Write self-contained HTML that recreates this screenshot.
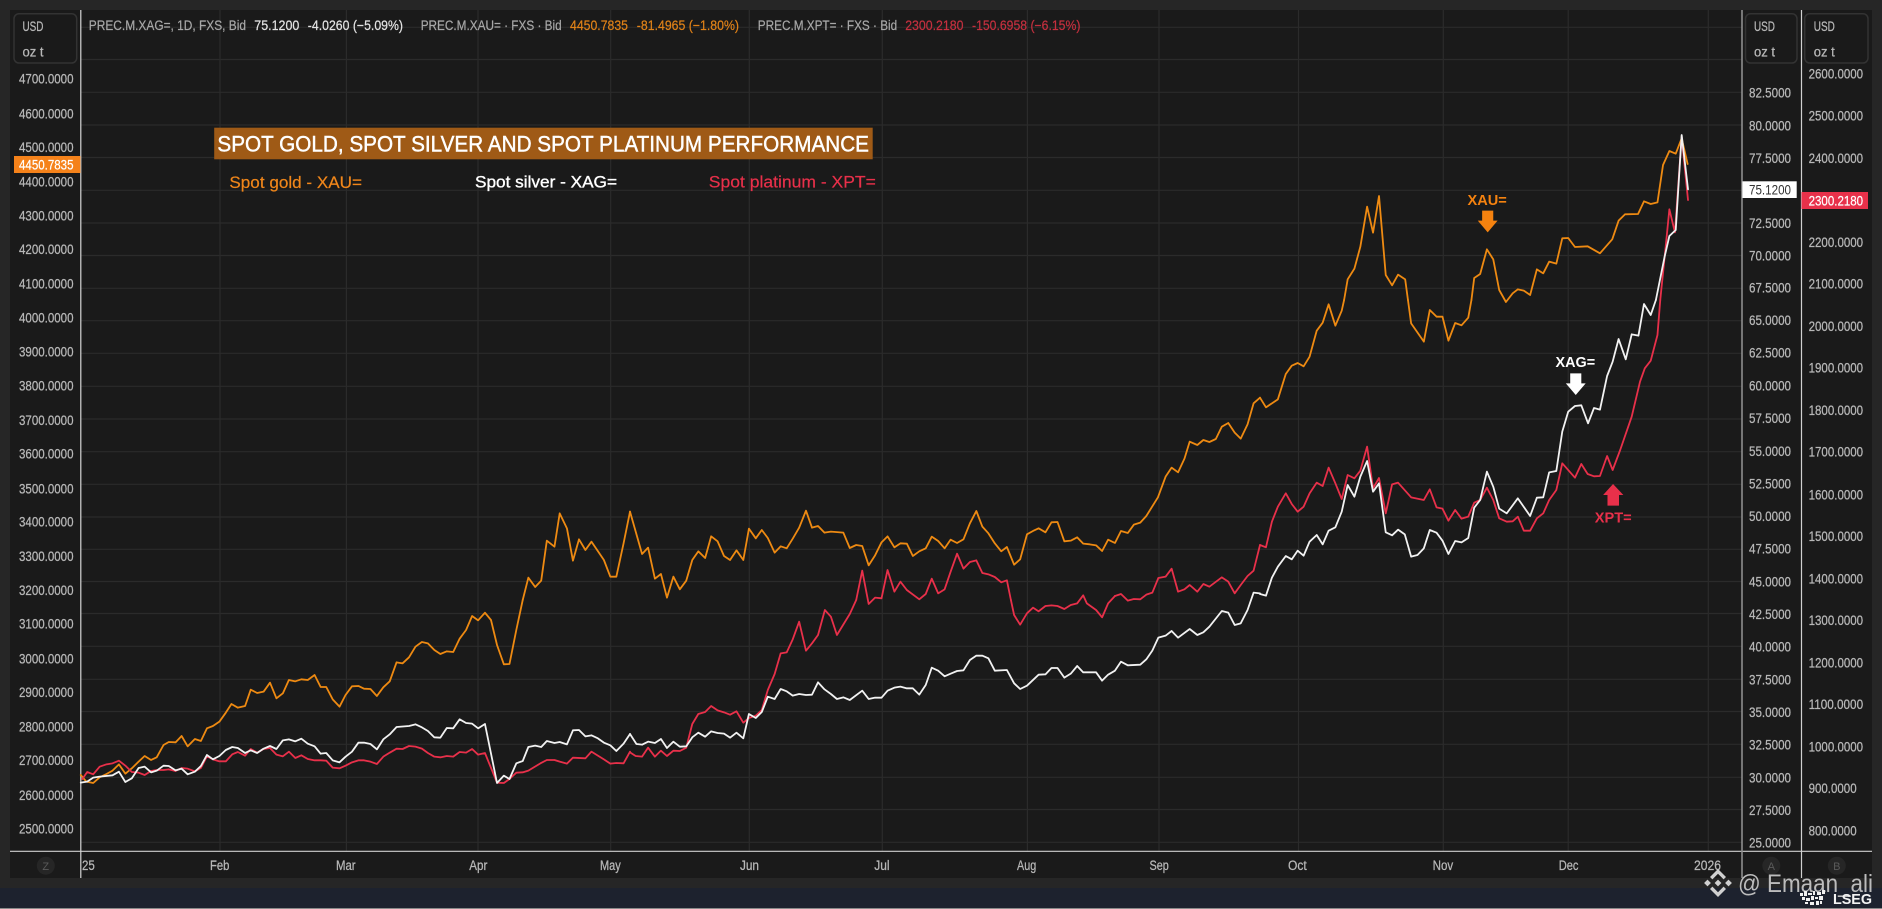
<!DOCTYPE html>
<html lang="en"><head><meta charset="utf-8"><title>Spot gold, silver and platinum</title>
<style>
html,body{margin:0;padding:0;background:#262626;width:1882px;height:909px;overflow:hidden}
svg{display:block;filter:blur(.3px)}
text{font-family:"Liberation Sans",sans-serif}
.ax text{font-size:13.5px;fill:#b8b8b8;stroke:#b8b8b8;stroke-width:.25}
.lg text{stroke-width:.2}
.l{fill:none;stroke-width:1.8;stroke-linejoin:round;stroke-linecap:round}
.l polyline{vector-effect:non-scaling-stroke}
.go{stroke:#ee8a12}.re{stroke:#e8304a}.wh{stroke:#f2f2f2}
</style></head><body>
<svg width="1882" height="909" viewBox="0 0 1882 909" xmlns="http://www.w3.org/2000/svg">
<rect width="1882" height="909" fill="#262626"/>
<rect x="0" y="888" width="1882" height="20" fill="#1d222e"/>
<rect x="0" y="908" width="1882" height="1" fill="#8a8a8a"/>
<rect x="10" y="10" width="1862" height="868" fill="#1a1a1a"/>

<!-- grid -->
<g stroke="#2b2b2b" stroke-width="1.2" fill="none">
<path d="M81 27.3H1742M81 59.5H1742M81 92.3H1742M81 125H1742M81 157.5H1742M81 190.3H1742M81 223H1742M81 255.5H1742M81 288.3H1742M81 320.7H1742M81 353.3H1742M81 386.3H1742M81 419H1742M81 451.7H1742M81 484.3H1742M81 517H1742M81 549.3H1742M81 581.5H1742M81 613.5H1742M81 646.3H1742M81 679.3H1742M81 711.5H1742M81 744.3H1742M81 777.3H1742M81 809.5H1742M81 842.3H1742"/>
<path d="M220 10V851M346.4 10V851M478 10V851M610.7 10V851M749.3 10V851M882.3 10V851M1027.4 10V851M1159 10V851M1298.5 10V851M1443.3 10V851M1568.2 10V851M1708.3 10V851"/>
</g>

<!-- axes -->
<path d="M10 851.3H1872" stroke="#cfcfcf" stroke-width="1.2"/>
<path d="M80.8 10V878" stroke="#d6d6d6" stroke-width="1.2"/>
<path d="M1742 10V878" stroke="#8e8e8e" stroke-width="1.6"/>
<path d="M1801.5 10V878" stroke="#d0d0d0" stroke-width="1.2"/>

<!-- unit boxes -->
<g fill="none" stroke="#333" stroke-width="1.5">
<rect x="14" y="13.7" width="62.7" height="49.3" rx="5"/>
<rect x="1745.5" y="13.7" width="51.5" height="49.3" rx="5"/>
<rect x="1804.7" y="13.7" width="63.3" height="49.3" rx="5"/>
</g>
<g class="ax">
<text x="22.5" y="31" textLength="21" lengthAdjust="spacingAndGlyphs">USD</text>
<text x="22.5" y="56.5" textLength="21" lengthAdjust="spacingAndGlyphs">oz t</text>
<text x="1754" y="31" textLength="21" lengthAdjust="spacingAndGlyphs">USD</text>
<text x="1754" y="56.5" textLength="21" lengthAdjust="spacingAndGlyphs">oz t</text>
<text x="1813.8" y="31" textLength="21" lengthAdjust="spacingAndGlyphs">USD</text>
<text x="1813.8" y="56.5" textLength="21" lengthAdjust="spacingAndGlyphs">oz t</text>
</g>

<!-- left axis -->
<g class="ax">
<text x="19" y="83.7" textLength="54.5" lengthAdjust="spacingAndGlyphs">4700.0000</text>
<text x="19" y="118.3" textLength="54.5" lengthAdjust="spacingAndGlyphs">4600.0000</text>
<text x="19" y="152" textLength="54.5" lengthAdjust="spacingAndGlyphs">4500.0000</text>
<text x="19" y="186.7" textLength="54.5" lengthAdjust="spacingAndGlyphs">4400.0000</text>
<text x="19" y="220.3" textLength="54.5" lengthAdjust="spacingAndGlyphs">4300.0000</text>
<text x="19" y="254" textLength="54.5" lengthAdjust="spacingAndGlyphs">4200.0000</text>
<text x="19" y="288.7" textLength="54.5" lengthAdjust="spacingAndGlyphs">4100.0000</text>
<text x="19" y="322.3" textLength="54.5" lengthAdjust="spacingAndGlyphs">4000.0000</text>
<text x="19" y="356.7" textLength="54.5" lengthAdjust="spacingAndGlyphs">3900.0000</text>
<text x="19" y="390.3" textLength="54.5" lengthAdjust="spacingAndGlyphs">3800.0000</text>
<text x="19" y="425" textLength="54.5" lengthAdjust="spacingAndGlyphs">3700.0000</text>
<text x="19" y="458.7" textLength="54.5" lengthAdjust="spacingAndGlyphs">3600.0000</text>
<text x="19" y="493.3" textLength="54.5" lengthAdjust="spacingAndGlyphs">3500.0000</text>
<text x="19" y="526.7" textLength="54.5" lengthAdjust="spacingAndGlyphs">3400.0000</text>
<text x="19" y="561" textLength="54.5" lengthAdjust="spacingAndGlyphs">3300.0000</text>
<text x="19" y="595" textLength="54.5" lengthAdjust="spacingAndGlyphs">3200.0000</text>
<text x="19" y="628.7" textLength="54.5" lengthAdjust="spacingAndGlyphs">3100.0000</text>
<text x="19" y="663.7" textLength="54.5" lengthAdjust="spacingAndGlyphs">3000.0000</text>
<text x="19" y="697" textLength="54.5" lengthAdjust="spacingAndGlyphs">2900.0000</text>
<text x="19" y="731.7" textLength="54.5" lengthAdjust="spacingAndGlyphs">2800.0000</text>
<text x="19" y="765" textLength="54.5" lengthAdjust="spacingAndGlyphs">2700.0000</text>
<text x="19" y="800" textLength="54.5" lengthAdjust="spacingAndGlyphs">2600.0000</text>
<text x="19" y="833.7" textLength="54.5" lengthAdjust="spacingAndGlyphs">2500.0000</text>
</g>
<rect x="14" y="156" width="66.4" height="17" fill="#f5821a"/>
<text x="19" y="169.7" font-size="13.5" fill="#fff" stroke="#fff" stroke-width=".2" textLength="54.5" lengthAdjust="spacingAndGlyphs">4450.7835</text>

<!-- axis A -->
<g class="ax">
<text x="1749" y="97.3" textLength="42" lengthAdjust="spacingAndGlyphs">82.5000</text>
<text x="1749" y="130.3" textLength="42" lengthAdjust="spacingAndGlyphs">80.0000</text>
<text x="1749" y="163" textLength="42" lengthAdjust="spacingAndGlyphs">77.5000</text>
<text x="1749" y="228" textLength="42" lengthAdjust="spacingAndGlyphs">72.5000</text>
<text x="1749" y="260.7" textLength="42" lengthAdjust="spacingAndGlyphs">70.0000</text>
<text x="1749" y="292.7" textLength="42" lengthAdjust="spacingAndGlyphs">67.5000</text>
<text x="1749" y="325" textLength="42" lengthAdjust="spacingAndGlyphs">65.0000</text>
<text x="1749" y="357.7" textLength="42" lengthAdjust="spacingAndGlyphs">62.5000</text>
<text x="1749" y="390.7" textLength="42" lengthAdjust="spacingAndGlyphs">60.0000</text>
<text x="1749" y="423" textLength="42" lengthAdjust="spacingAndGlyphs">57.5000</text>
<text x="1749" y="456" textLength="42" lengthAdjust="spacingAndGlyphs">55.0000</text>
<text x="1749" y="488.3" textLength="42" lengthAdjust="spacingAndGlyphs">52.5000</text>
<text x="1749" y="521" textLength="42" lengthAdjust="spacingAndGlyphs">50.0000</text>
<text x="1749" y="553.3" textLength="42" lengthAdjust="spacingAndGlyphs">47.5000</text>
<text x="1749" y="586.3" textLength="42" lengthAdjust="spacingAndGlyphs">45.0000</text>
<text x="1749" y="619" textLength="42" lengthAdjust="spacingAndGlyphs">42.5000</text>
<text x="1749" y="651.7" textLength="42" lengthAdjust="spacingAndGlyphs">40.0000</text>
<text x="1749" y="684.3" textLength="42" lengthAdjust="spacingAndGlyphs">37.5000</text>
<text x="1749" y="717" textLength="42" lengthAdjust="spacingAndGlyphs">35.0000</text>
<text x="1749" y="749.7" textLength="42" lengthAdjust="spacingAndGlyphs">32.5000</text>
<text x="1749" y="782.3" textLength="42" lengthAdjust="spacingAndGlyphs">30.0000</text>
<text x="1749" y="815" textLength="42" lengthAdjust="spacingAndGlyphs">27.5000</text>
<text x="1749" y="847.7" textLength="42" lengthAdjust="spacingAndGlyphs">25.0000</text>
</g>
<rect x="1742.4" y="181.3" width="54.3" height="16.7" fill="#fff"/>
<text x="1749" y="194.7" font-size="13.5" fill="#333" textLength="42" lengthAdjust="spacingAndGlyphs">75.1200</text>

<!-- axis B -->
<g class="ax">
<text x="1808.6" y="78.7" textLength="54.5" lengthAdjust="spacingAndGlyphs">2600.0000</text>
<text x="1808.6" y="120.3" textLength="54.5" lengthAdjust="spacingAndGlyphs">2500.0000</text>
<text x="1808.6" y="163" textLength="54.5" lengthAdjust="spacingAndGlyphs">2400.0000</text>
<text x="1808.6" y="247" textLength="54.5" lengthAdjust="spacingAndGlyphs">2200.0000</text>
<text x="1808.6" y="288.7" textLength="54.5" lengthAdjust="spacingAndGlyphs">2100.0000</text>
<text x="1808.6" y="331" textLength="54.5" lengthAdjust="spacingAndGlyphs">2000.0000</text>
<text x="1808.6" y="372.7" textLength="54.5" lengthAdjust="spacingAndGlyphs">1900.0000</text>
<text x="1808.6" y="415" textLength="54.5" lengthAdjust="spacingAndGlyphs">1800.0000</text>
<text x="1808.6" y="456.7" textLength="54.5" lengthAdjust="spacingAndGlyphs">1700.0000</text>
<text x="1808.6" y="499.3" textLength="54.5" lengthAdjust="spacingAndGlyphs">1600.0000</text>
<text x="1808.6" y="541" textLength="54.5" lengthAdjust="spacingAndGlyphs">1500.0000</text>
<text x="1808.6" y="583.7" textLength="54.5" lengthAdjust="spacingAndGlyphs">1400.0000</text>
<text x="1808.6" y="625" textLength="54.5" lengthAdjust="spacingAndGlyphs">1300.0000</text>
<text x="1808.6" y="667.7" textLength="54.5" lengthAdjust="spacingAndGlyphs">1200.0000</text>
<text x="1808.6" y="709" textLength="54.5" lengthAdjust="spacingAndGlyphs">1100.0000</text>
<text x="1808.6" y="751.7" textLength="54.5" lengthAdjust="spacingAndGlyphs">1000.0000</text>
<text x="1808.6" y="793" textLength="48" lengthAdjust="spacingAndGlyphs">900.0000</text>
<text x="1808.6" y="835.7" textLength="48" lengthAdjust="spacingAndGlyphs">800.0000</text>
</g>
<rect x="1801.5" y="192" width="66.5" height="17" fill="#e8314a"/>
<text x="1808.6" y="205.5" font-size="13.5" fill="#fff" stroke="#fff" stroke-width=".2" textLength="54.5" lengthAdjust="spacingAndGlyphs">2300.2180</text>

<!-- time axis -->
<g class="ax">
<text x="82" y="870" textLength="12.8" lengthAdjust="spacingAndGlyphs">25</text>
<text x="210" y="870" textLength="19.4" lengthAdjust="spacingAndGlyphs">Feb</text>
<text x="336" y="870" textLength="19.6" lengthAdjust="spacingAndGlyphs">Mar</text>
<text x="469.3" y="870" textLength="18.1" lengthAdjust="spacingAndGlyphs">Apr</text>
<text x="600" y="870" textLength="20.8" lengthAdjust="spacingAndGlyphs">May</text>
<text x="740" y="870" textLength="19" lengthAdjust="spacingAndGlyphs">Jun</text>
<text x="874.3" y="870" textLength="15.3" lengthAdjust="spacingAndGlyphs">Jul</text>
<text x="1017" y="870" textLength="19.2" lengthAdjust="spacingAndGlyphs">Aug</text>
<text x="1149.5" y="870" textLength="19.3" lengthAdjust="spacingAndGlyphs">Sep</text>
<text x="1288" y="870" textLength="18.8" lengthAdjust="spacingAndGlyphs">Oct</text>
<text x="1432.6" y="870" textLength="20.6" lengthAdjust="spacingAndGlyphs">Nov</text>
<text x="1558.7" y="870" textLength="19.8" lengthAdjust="spacingAndGlyphs">Dec</text>
<text x="1694" y="870" textLength="27" lengthAdjust="spacingAndGlyphs">2026</text>
</g>
<g fill="#262626"><circle cx="45.8" cy="865.7" r="9"/><circle cx="1771.3" cy="865.7" r="9"/><circle cx="1836.8" cy="865.7" r="9"/></g>
<g font-size="11" fill="#5a5a5a" text-anchor="middle"><text x="45.8" y="870">Z</text><text x="1771.3" y="870">A</text><text x="1836.8" y="870">B</text></g>

<!-- legend -->
<g font-size="13.5" class="lg">
<text x="88.8" y="30" fill="#a8a8a8" stroke="#a8a8a8" textLength="157.2" lengthAdjust="spacingAndGlyphs">PREC.M.XAG=, 1D, FXS, Bid</text>
<text x="254.3" y="30" fill="#e4e4e4" stroke="#e4e4e4" textLength="45" lengthAdjust="spacingAndGlyphs">75.1200</text>
<text x="307.8" y="30" fill="#e4e4e4" stroke="#e4e4e4" textLength="95.2" lengthAdjust="spacingAndGlyphs">-4.0260 (−5.09%)</text>
<text x="420.7" y="30" fill="#a8a8a8" stroke="#a8a8a8" textLength="141" lengthAdjust="spacingAndGlyphs">PREC.M.XAU= · FXS · Bid</text>
<text x="570" y="30" fill="#e08218" stroke="#e08218" textLength="58" lengthAdjust="spacingAndGlyphs">4450.7835</text>
<text x="636.8" y="30" fill="#e08218" stroke="#e08218" textLength="102.2" lengthAdjust="spacingAndGlyphs">-81.4965 (−1.80%)</text>
<text x="757.8" y="30" fill="#a8a8a8" stroke="#a8a8a8" textLength="139.4" lengthAdjust="spacingAndGlyphs">PREC.M.XPT= · FXS · Bid</text>
<text x="905.2" y="30" fill="#c4303f" stroke="#c4303f" textLength="58.3" lengthAdjust="spacingAndGlyphs">2300.2180</text>
<text x="972" y="30" fill="#c4303f" stroke="#c4303f" textLength="108.4" lengthAdjust="spacingAndGlyphs">-150.6958 (−6.15%)</text>
</g>

<!-- title -->
<rect x="214.2" y="127.7" width="658.5" height="31.6" fill="#9f5a16"/>
<text x="217.4" y="151.5" font-size="22" fill="#fff" stroke="#fff" stroke-width=".45" textLength="651.6" lengthAdjust="spacingAndGlyphs">SPOT GOLD, SPOT SILVER AND SPOT PLATINUM PERFORMANCE</text>
<text x="229.4" y="188" font-size="16.5" fill="#f0861a" stroke="#f0861a" stroke-width=".2" textLength="132.6" lengthAdjust="spacingAndGlyphs">Spot gold - XAU=</text>
<text x="475" y="187.5" font-size="16.5" fill="#fff" stroke="#fff" stroke-width=".35" textLength="142" lengthAdjust="spacingAndGlyphs">Spot silver - XAG=</text>
<text x="708.8" y="187.5" font-size="16.5" fill="#e8304a" stroke="#e8304a" stroke-width=".2" textLength="167.1" lengthAdjust="spacingAndGlyphs">Spot platinum - XPT=</text>

<!-- gold -->
<g class="l go">
<polyline transform="translate(0,600) scale(.40179,.33333)" points="201,525 215,545 232,549 248,532 265,522 280,512 296,493 312,521 328,505 345,485 360,468 376,480 390,472 407,435 420,426 437,427 452,408 467,439 485,417 500,423 515,385 530,378 546,365 562,338 576,312 592,323 610,318 624,269 640,279 656,275 672,248 688,295 704,280 719,240 735,244 750,238 766,240 783,225 798,261 812,261 828,298 845,320 860,285 876,259 892,258 906,266 922,267 938,288 954,262 970,244 987,187 1002,190 1018,172 1034,140 1050,126 1065,130 1081,150 1096,162 1112,154 1128,156 1144,116 1160,90 1175,48 1190,61 1207,38 1222,60 1237,135 1254,193 1268,192 1285,90 1301,0"/>
<polyline transform="translate(0,300) scale(.40179,.33333)" points="1301,900 1315,833 1332,861 1347,842 1361,722 1380,740 1393,640 1411,685 1426,782 1441,718 1457,750 1472,725 1503,780 1519,830 1534,830 1552,730 1568,635"/>
<polyline transform="translate(630,300) scale(.40179,.33333)" points="0,635 30,762 45,743 62,836 77,822 92,893 108,830 124,868 140,842 155,780 170,754 187,774 202,709 218,724 234,768 249,780 265,751 282,780 296,686 313,715 328,690 343,714 360,758 375,739 390,745 405,716 421,683 438,632 453,683 468,678 484,698 500,695 531,698 547,744 563,735 578,738 594,796 610,766 626,727 641,709 658,742 673,730 689,731 704,768 720,754 736,745 751,710 767,723 783,745 798,719 814,729 830,718 846,670 862,633 877,680 892,700 908,730 924,754 938,741 956,794 971,778 988,703 1003,693 1017,685 1034,697 1049,667 1064,666 1081,724 1097,722 1113,712 1128,731 1144,733 1160,736 1175,753 1190,719 1207,729 1222,693 1239,699 1254,674 1270,668 1285,648 1314,592 1333,530 1348,503 1364,517 1380,476 1393,425 1412,435 1427,420 1442,426 1458,417 1473,380 1489,369 1505,398 1520,416 1537,373 1552,310 1568,293"/>
<polyline transform="translate(1260,300) scale(.39668,.33333)" points="0,293 15,322 45,298 65,222 80,197 95,189 110,199 125,170 143,92 158,68 173,13 190,77 206,32 212,0"/>
<polyline transform="translate(1260,0) scale(.39668,.33333)" points="212,900 221,838 238,806 253,740 270,620 285,698 300,588 317,825 333,856 348,824 366,838 373,900"/>
<polyline transform="translate(1260,300) scale(.39668,.33333)" points="373,0 381,70 413,125 428,30 445,50 460,50 475,122 492,69 508,76 525,53 533,0"/>
<polyline transform="translate(1260,0) scale(.39668,.33333)" points="533,900 540,834 555,822 572,748 588,778 603,870 620,906 637,880 650,868 665,872 681,885 698,808 714,820 729,785 747,791 762,715 777,714 794,741 826,739 857,760 888,718 904,662 920,643 953,642 968,604 985,612 1002,607 1016,495 1032,453 1048,461 1063,415 1078,492"/>
</g>

<!-- platinum -->
<g class="l re">
<polyline transform="translate(0,600) scale(.40179,.33333)" points="205,537 217,516 232,523 248,500 265,493 280,490 296,482 312,497 328,516 345,518 360,525 376,513 390,510 407,510 420,508 437,513 452,504 467,506 485,514 500,504 515,469 530,478 546,484 562,484 578,463 592,456 610,467 624,447 640,458 656,447 672,444 688,464 704,469 719,455 735,474 750,466 766,477 783,481 798,481 812,482 828,503 845,505 860,497 876,487 892,481 906,481 922,485 938,492 954,470 970,458 987,446 1002,447 1018,438 1034,440 1050,446 1065,459 1081,470 1096,472 1112,468 1128,470 1144,456 1160,458 1175,447 1190,464 1207,459 1237,548 1254,549 1268,537 1285,518 1301,517 1315,512 1345,490 1361,480 1380,480 1393,485 1411,491 1426,473 1457,475 1472,455 1503,478 1519,491 1534,489 1552,490 1568,455"/>
<polyline transform="translate(630,600) scale(.40179,.33333)" points="0,457 14,468 30,470 45,443 62,470 77,452 92,468 108,452 124,453 140,443 155,372 170,342 187,336 202,318 218,331 234,337 249,344 265,334 282,368 296,354 313,347 328,330 343,270 360,222 375,160 390,157 405,118 421,65 438,152 453,130 468,105 485,30 500,50 515,105 547,42 563,0"/>
<polyline transform="translate(630,300) scale(.40179,.33333)" points="563,900 578,812 594,912 610,893 626,895 641,810 658,875 673,845 689,870 720,898 736,882 751,836 767,880 783,868 798,815 814,761 830,806 846,786 862,781 877,819 892,823 908,831 924,847 938,841 948,900"/>
<polyline transform="translate(630,600) scale(.40179,.33333)" points="948,0 956,45 971,74 988,40 1003,23 1017,34 1034,18 1049,16 1064,18 1081,27 1097,15 1113,10 1128,-14 1137,10 1160,30 1175,52 1190,10 1207,-12"/>
<polyline transform="translate(630,300) scale(.40179,.33333)" points="1207,888 1222,882 1239,902 1254,897 1270,898 1285,884 1300,878 1315,834 1333,830 1348,806 1364,875 1380,868 1393,855 1412,875 1427,852 1442,860 1473,832 1489,845 1505,880 1520,855 1537,828 1552,812 1568,735"/>
<polyline transform="translate(1260,300) scale(.39668,.33333)" points="0,735 15,742 30,665 45,620 65,580 80,612 95,635 110,620 125,580 143,548 158,558 173,503 190,550 206,597 221,525 238,535 253,512 270,440 285,565 300,534 317,640 333,553 348,548 381,592 413,600 428,568 445,622 460,626 475,662 492,630 508,656 525,650 540,608 555,600 572,563 588,600 603,655 622,665 637,664 650,650 665,692 681,692 698,655 714,640 729,600 747,570 762,490 794,533 810,492 826,522 842,529 857,528 875,468 889,510 908,450 937,350 958,245 970,205 985,182 1002,105 1009,0"/>
<polyline transform="translate(1260,0) scale(.39668,.33333)" points="1009,900 1021,760 1032,628 1046,697 1063,410 1079,600"/>
</g>

<!-- silver -->
<g class="l wh">
<polyline transform="translate(0,600) scale(.40179,.33333)" points="201,548 217,545 232,533 248,530 280,526 296,515 312,546 328,535 345,504 360,500 376,517 390,512 407,497 420,498 437,511 452,506 467,523 485,515 500,498 515,465 530,478 546,468 562,450 578,441 592,444 610,459 624,451 640,459 656,446 672,438 688,447 704,421 719,418 735,424 750,416 766,431 783,439 798,461 812,459 828,481 845,487 860,470 876,455 892,428 906,428 922,432 938,448 954,418 970,403 987,381 1018,378 1034,373 1050,382 1065,393 1081,412 1096,413 1112,384 1128,385 1144,358 1160,369 1175,371 1190,385 1207,372 1237,549 1254,527 1268,537 1285,490 1301,483 1315,441 1332,437 1347,441 1361,423 1380,429 1393,426 1411,433 1426,391 1441,390 1457,409 1472,406 1488,415 1503,428 1519,436 1534,453 1552,431 1568,402"/>
<polyline transform="translate(630,600) scale(.40179,.33333)" points="0,402 16,432 30,434 45,425 62,429 77,417 92,444 108,425 124,440 140,439 155,412 170,398 187,410 202,394 218,399 234,401 249,413 265,398 282,415 296,342 313,354 328,336 343,290 360,297 375,267 390,274 405,287 421,282 438,285 453,284 468,247 484,268 500,282 515,297 531,292 547,300 578,272 594,297 610,293 626,293 641,272 658,263 673,260 689,265 704,265 720,284 736,255 751,203 767,212 783,229 798,221 814,213 830,211 846,180 862,167 877,167 892,175 908,212 938,210 956,250 971,267 988,257 1017,224 1034,223 1049,204 1064,204 1081,233 1097,221 1113,198 1128,217 1160,217 1175,242 1190,224 1207,212 1222,185 1239,196 1270,194 1285,178 1300,152 1315,113 1333,107 1348,93 1364,113 1393,87 1412,105 1427,97 1442,80 1473,33 1489,38 1505,75 1520,70 1537,30 1552,-22 1568,-20"/>
<polyline transform="translate(1260,300) scale(.39668,.33333)" points="0,882 15,887 30,833 45,800 65,768 80,778 95,752 110,767 125,725 143,705 158,733 173,692 190,682 206,635 221,555 238,590 253,530 270,483 285,575 300,550 317,697 333,706 348,689 365,703 381,770 397,765 413,745 428,690 445,698 460,722 475,762 492,723 508,727 525,714 540,623 555,600 572,515 588,560 603,626 622,640 650,595 681,648 698,593 714,592 729,517 747,513 762,395 777,335 794,318 810,316 827,370 842,324 857,329 875,228 889,185 904,117 922,178 937,103 954,107 968,12 985,45 998,0"/>
<polyline transform="translate(1260,0) scale(.39668,.33333)" points="998,900 1020,770 1032,708 1048,690 1063,405 1079,568"/>
</g>

<!-- annotations -->
<polygon transform="translate(1260,0) scale(.39668,.33333)" fill="#f5820f" points="560,632 588,632 588,662 599,662 574,697 549,662 560,662"/>
<text x="1467.5" y="205" font-size="14.5" font-weight="bold" fill="#f5820f" textLength="39.3" lengthAdjust="spacingAndGlyphs">XAU=</text>
<polygon transform="translate(1260,300) scale(.39668,.33333)" fill="#fff" points="782,220 810,220 810,250 821,250 796,285 771,250 782,250"/>
<text x="1555.5" y="367" font-size="14.5" font-weight="bold" fill="#fff" textLength="39.6" lengthAdjust="spacingAndGlyphs">XAG=</text>
<polygon transform="translate(1260,300) scale(.39668,.33333)" fill="#e8304a" points="890,552 916,585 905,585 905,617 876,617 876,585 865,585"/>
<text x="1594.8" y="522.5" font-size="14.5" font-weight="bold" fill="#e8304a" textLength="36.9" lengthAdjust="spacingAndGlyphs">XPT=</text>

<!-- watermark -->
<g transform="translate(1718,883)" fill="#d0d0d0">
<polygon points="0,-3.4 3.4,0 0,3.4 -3.4,0"/>
<polygon points="-10.5,-3.4 -7.1,0 -10.5,3.4 -13.9,0"/>
<polygon points="10.5,-3.4 13.9,0 10.5,3.4 7.1,0"/>
<polygon points="0,-14 8,-6 5.6,-3.6 0,-9.2 -5.6,-3.6 -8,-6"/>
<polygon points="0,14 8,6 5.6,3.6 0,9.2 -5.6,3.6 -8,6"/>
</g>
<text x="1738" y="892" font-size="25" fill="#bcbcbc" textLength="135" lengthAdjust="spacingAndGlyphs">@ Emaan_ali</text>
<g fill="#f0f0f0">
<rect x="1800" y="893" width="3" height="3"/><rect x="1804" y="891" width="3" height="5"/><rect x="1808" y="893" width="4" height="2"/><rect x="1813" y="891" width="2" height="4"/><rect x="1817" y="892" width="4" height="3"/><rect x="1822" y="890" width="3" height="4"/>
<rect x="1802" y="897" width="3" height="3"/><rect x="1806" y="898" width="4" height="3"/><rect x="1811" y="896" width="3" height="4"/><rect x="1815" y="897" width="3" height="2"/><rect x="1819" y="896" width="4" height="4"/>
<rect x="1805" y="902" width="3" height="2"/><rect x="1810" y="902" width="4" height="3"/><rect x="1816" y="901" width="3" height="4"/><rect x="1820" y="901" width="2" height="3"/>
</g>
<text x="1833" y="904" font-size="15" font-weight="bold" fill="#f2f2f2" textLength="39" lengthAdjust="spacingAndGlyphs">LSEG</text>
</svg>
</body></html>
